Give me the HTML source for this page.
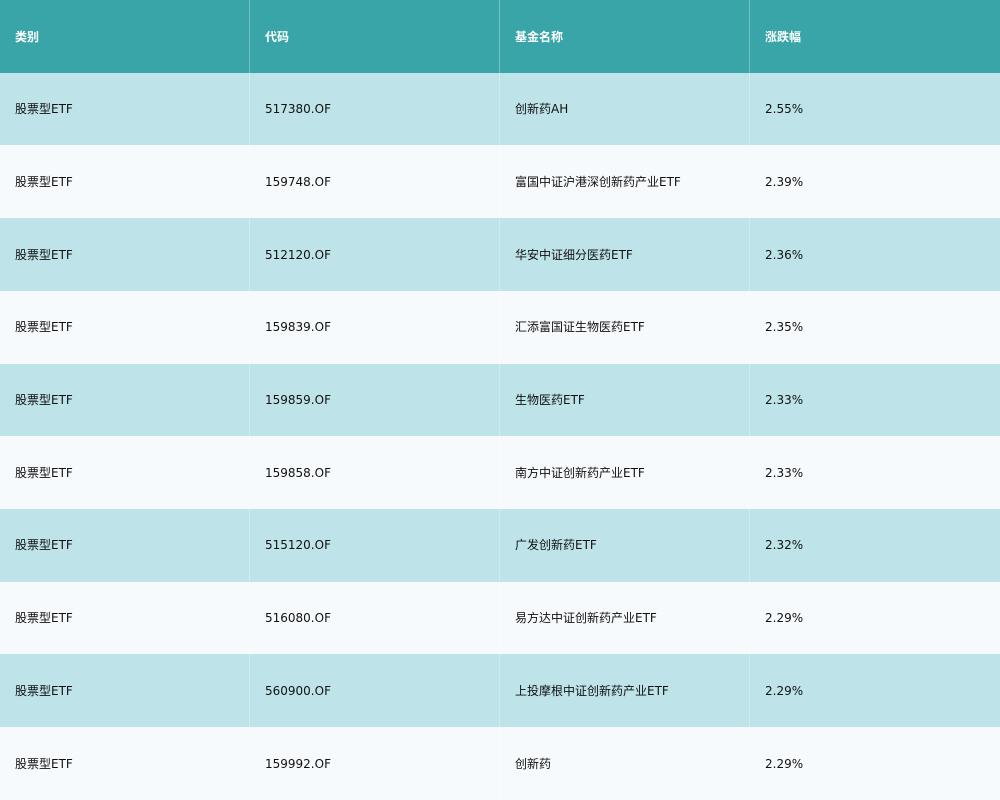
<!DOCTYPE html>
<html><head><meta charset="utf-8"><style>
body{margin:0;width:1000px;height:800px;overflow:hidden;background:#f7fafc;font-family:"DejaVu Sans","Noto Sans CJK SC",sans-serif;}
.r{position:absolute;left:0;width:1000px;height:73px;}
.c{position:absolute;top:0;height:100%;width:250px;box-sizing:border-box;padding-left:15px;font-size:12px;line-height:16px;color:#111;display:flex;align-items:center;border-right:1px solid rgba(255,255,255,0.3);}
.h{background:#3aa5a8;}
.h .c{color:#fff;font-weight:bold;}
.b{background:#bee4ea;}
.w{background:#f7fafc;}
</style></head><body>
<div class="r h" style="top:0"><div class="c" style="left:0">类别</div><div class="c" style="left:250px">代码</div><div class="c" style="left:500px">基金名称</div><div class="c" style="left:750px;border:none">涨跌幅</div></div>
<div class="r b" style="top:72.7px"><div class="c" style="left:0">股票型ETF</div><div class="c" style="left:250px">517380.OF</div><div class="c" style="left:500px">创新药AH</div><div class="c" style="left:750px;border:none">2.55%</div></div>
<div class="r w" style="top:145.4px"><div class="c" style="left:0">股票型ETF</div><div class="c" style="left:250px">159748.OF</div><div class="c" style="left:500px">富国中证沪港深创新药产业ETF</div><div class="c" style="left:750px;border:none">2.39%</div></div>
<div class="r b" style="top:218.1px"><div class="c" style="left:0">股票型ETF</div><div class="c" style="left:250px">512120.OF</div><div class="c" style="left:500px">华安中证细分医药ETF</div><div class="c" style="left:750px;border:none">2.36%</div></div>
<div class="r w" style="top:290.8px"><div class="c" style="left:0">股票型ETF</div><div class="c" style="left:250px">159839.OF</div><div class="c" style="left:500px">汇添富国证生物医药ETF</div><div class="c" style="left:750px;border:none">2.35%</div></div>
<div class="r b" style="top:363.5px"><div class="c" style="left:0">股票型ETF</div><div class="c" style="left:250px">159859.OF</div><div class="c" style="left:500px">生物医药ETF</div><div class="c" style="left:750px;border:none">2.33%</div></div>
<div class="r w" style="top:436.2px"><div class="c" style="left:0">股票型ETF</div><div class="c" style="left:250px">159858.OF</div><div class="c" style="left:500px">南方中证创新药产业ETF</div><div class="c" style="left:750px;border:none">2.33%</div></div>
<div class="r b" style="top:508.9px"><div class="c" style="left:0">股票型ETF</div><div class="c" style="left:250px">515120.OF</div><div class="c" style="left:500px">广发创新药ETF</div><div class="c" style="left:750px;border:none">2.32%</div></div>
<div class="r w" style="top:581.6px"><div class="c" style="left:0">股票型ETF</div><div class="c" style="left:250px">516080.OF</div><div class="c" style="left:500px">易方达中证创新药产业ETF</div><div class="c" style="left:750px;border:none">2.29%</div></div>
<div class="r b" style="top:654.3px"><div class="c" style="left:0">股票型ETF</div><div class="c" style="left:250px">560900.OF</div><div class="c" style="left:500px">上投摩根中证创新药产业ETF</div><div class="c" style="left:750px;border:none">2.29%</div></div>
<div class="r w" style="top:727px"><div class="c" style="left:0">股票型ETF</div><div class="c" style="left:250px">159992.OF</div><div class="c" style="left:500px">创新药</div><div class="c" style="left:750px;border:none">2.29%</div></div>
</body></html>
